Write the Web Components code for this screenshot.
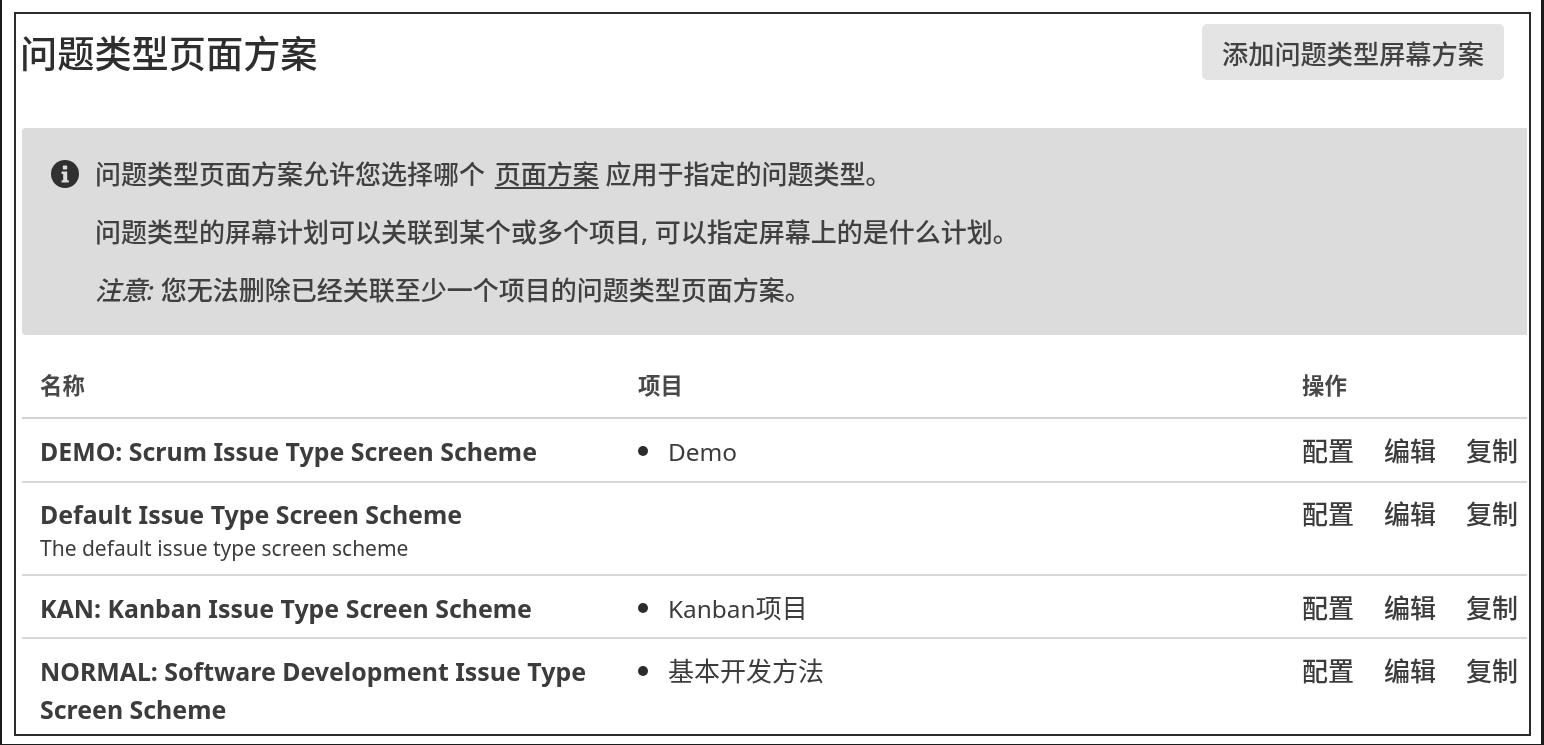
<!DOCTYPE html>
<html lang="zh">
<head>
<meta charset="utf-8">
<title>问题类型页面方案</title>
<style>
    html, body {
        height: 100%;
    }

    body {
        margin: 0;
        box-sizing: border-box;
        background: #fff;
        border-left: 2px solid #1c1c1c;
        border-right: 3px solid #1c1c1c;
        border-bottom: 1px solid #1c1c1c;
        padding: 12px 10px 8px 12px;
        overflow: hidden;
        font-family: "Noto Sans", "Noto Sans CJK SC", sans-serif;
        color: #3a3a3a;
    }

    info-panel a {
        margin-left: 3px;
        color: inherit;
        text-underline-offset: 3px;
    }
</style>
</head>
<body>
<issue-screen-page>
    <page-header slot="header" heading="问题类型页面方案" action="添加问题类型屏幕方案"></page-header>
    <info-panel slot="info">
        <p>问题类型页面方案允许您选择哪个 <a href="#">页面方案</a> 应用于指定的问题类型。</p>
        <p>问题类型的屏幕计划可以关联到某个或多个项目, 可以指定屏幕上的是什么计划。</p>
        <p><em>注意:</em> 您无法删除已经关联至少一个项目的问题类型页面方案。</p>
    </info-panel>
    <scheme-table slot="table">
        <scheme-row name="DEMO: Scrum Issue Type Screen Scheme" project="Demo"></scheme-row>
        <scheme-row name="Default Issue Type Screen Scheme" description="The default issue type screen scheme"></scheme-row>
        <scheme-row name="KAN: Kanban Issue Type Screen Scheme" project="Kanban项目"></scheme-row>
        <scheme-row name="NORMAL: Software Development Issue Type Screen Scheme" project="基本开发方法"></scheme-row>
    </scheme-table>
</issue-screen-page>

<script>
const pageTemplate = document.createElement("template");
pageTemplate.innerHTML = `
    <style>
        :host {
            display: flex;
            flex-direction: column;
            box-sizing: border-box;
            height: 100%;
            border: 2px solid #2c2c2c;
            padding: 10px 2px 0 6px;
            overflow: hidden;
            filter: blur(0.45px);
        }

        ::slotted(*) {
            flex: none;
        }
    </style>
    <slot name="header"></slot>
    <slot name="info"></slot>
    <slot name="table"></slot>
`;

class IssueScreenPage extends HTMLElement {
    constructor() {
        super();
        this.attachShadow({ mode: "open" }).appendChild(pageTemplate.content.cloneNode(true));
    }
}

const headerTemplate = document.createElement("template");
headerTemplate.innerHTML = `
    <style>
        :host {
            display: flex;
            justify-content: space-between;
            align-items: center;
            height: 56px;
            margin-bottom: 48px;
            padding-right: 23px;
        }

        h1 {
            margin: 4px 0 0 -2px;
            font-size: 37.2px;
            font-weight: 500;
            line-height: 56px;
            color: #2e2e2e;
        }

        button {
            width: 302px;
            height: 56px;
            border: 0;
            border-radius: 5px;
            background: #e4e4e4;
            color: #424242;
            font: inherit;
            font-size: 26.2px;
            font-weight: 500;
            padding: 2px 0 0;
        }
    </style>
    <h1></h1>
    <button type="button"></button>
`;

class PageHeader extends HTMLElement {
    constructor() {
        super();
        const shadowRoot = this.attachShadow({ mode: "open" });
        shadowRoot.appendChild(headerTemplate.content.cloneNode(true));
        shadowRoot.querySelector("h1").textContent = this.getAttribute("heading");
        shadowRoot.querySelector("button").textContent = this.getAttribute("action");
    }
}

const infoTemplate = document.createElement("template");
infoTemplate.innerHTML = `
    <style>
        :host {
            display: flex;
            box-sizing: border-box;
            height: 207px;
            padding: 28px 0 0 29px;
            gap: 16px;
            background: #dcdcdc;
            border-radius: 4px 0 0 4px;
            font-size: 26px;
            font-weight: 500;
            color: #404040;
        }

        svg {
            flex: none;
            width: 28px;
            height: 28px;
            margin-top: 4px;
        }

        ::slotted(p) {
            margin: 0 0 20.5px;
            line-height: 37.5px;
        }

        ::slotted(p:last-child) {
            margin-bottom: 0;
        }

        .lines {
            display: flex;
            flex-direction: column;
        }
    </style>
    <svg viewBox="0 0 28 28" aria-hidden="true">
        <circle cx="14" cy="14" r="14" fill="#303030"/>
        <rect x="11.8" y="5.6" width="4.4" height="4" rx="1" fill="#dcdcdc"/>
        <path d="M10.6 11.6h5.6v8.6h1.6v2.4h-7.2v-2.4h1.6v-6.2h-1.6z" fill="#dcdcdc"/>
    </svg>
    <div class="lines"><slot></slot></div>
`;

class InfoPanel extends HTMLElement {
    constructor() {
        super();
        this.attachShadow({ mode: "open" }).appendChild(infoTemplate.content.cloneNode(true));
    }
}

const tableTemplate = document.createElement("template");
tableTemplate.innerHTML = `
    <style>
        :host {
            display: block;
        }

        .head {
            display: grid;
            grid-template-columns: 598px 664px 1fr;
            box-sizing: border-box;
            height: 84px;
            padding-top: 16px;
            align-items: center;
            border-bottom: 2px solid #d4d4d4;
            font-size: 22.4px;
            font-weight: 700;
            color: #484848;
        }

        .head span {
            padding-left: 18px;
        }
    </style>
    <div class="head">
        <span>名称</span>
        <span>项目</span>
        <span>操作</span>
    </div>
    <slot></slot>
`;

class SchemeTable extends HTMLElement {
    constructor() {
        super();
        this.attachShadow({ mode: "open" }).appendChild(tableTemplate.content.cloneNode(true));
    }
}

const rowTemplate = document.createElement("template");
rowTemplate.innerHTML = `
    <style>
        :host {
            display: grid;
            grid-template-columns: 598px 664px 1fr;
            box-sizing: border-box;
            border-bottom: 2px solid #d8d8d8;
            padding: 13px 0 10px;
            font-size: 26px;
            line-height: 38px;
            color: #3c3c3c;
        }

        :host(:first-child) {
            padding-bottom: 11px;
        }

        :host([description]) {
            padding: 12px 0 11px;
        }

        :host(:last-child) {
            border-bottom: 0;
        }

        .name, .project, .actions {
            padding-left: 18px;
        }

        strong {
            display: block;
            font-size: 24.9px;
            font-weight: 700;
        }

        small {
            display: block;
            font-size: 21px;
            line-height: 30px;
        }

        ul {
            margin: 0;
            padding: 0;
            list-style: none;
        }

        li {
            display: flex;
            align-items: center;
            gap: 20px;
        }

        li::before {
            content: "";
            width: 10px;
            height: 10px;
            border-radius: 50%;
            background: #2c2c2c;
        }

        .latin {
            font-size: 24.4px;
            line-height: 1;
        }

        .actions {
            display: flex;
            align-items: flex-start;
            gap: 30px;
            font-weight: 500;
            white-space: nowrap;
        }

        a {
            color: inherit;
            text-decoration: none;
        }
    </style>
    <div class="name"><strong></strong><small></small></div>
    <div class="project"></div>
    <div class="actions">
        <a href="#">配置</a>
        <a href="#">编辑</a>
        <a href="#">复制</a>
    </div>
`;

class SchemeRow extends HTMLElement {
    constructor() {
        super();
        const shadowRoot = this.attachShadow({ mode: "open" });
        shadowRoot.appendChild(rowTemplate.content.cloneNode(true));
        shadowRoot.querySelector("strong").textContent = this.getAttribute("name");

        const small = shadowRoot.querySelector("small");
        if (this.hasAttribute("description")) {
            small.textContent = this.getAttribute("description");
        } else {
            small.remove();
        }

        if (this.hasAttribute("project")) {
            const list = document.createElement("ul");
            const item = document.createElement("li");
            const label = document.createElement("span");
            // latin runs sit a bit smaller than the CJK text next to them
            label.innerHTML = this.getAttribute("project").replace(/[A-Za-z]+/g, '<span class="latin">$&</span>');
            item.appendChild(label);
            list.appendChild(item);
            shadowRoot.querySelector(".project").appendChild(list);
        }
    }
}

window.customElements.define("issue-screen-page", IssueScreenPage);
window.customElements.define("page-header", PageHeader);
window.customElements.define("info-panel", InfoPanel);
window.customElements.define("scheme-table", SchemeTable);
window.customElements.define("scheme-row", SchemeRow);
</script>
</body>
</html>
